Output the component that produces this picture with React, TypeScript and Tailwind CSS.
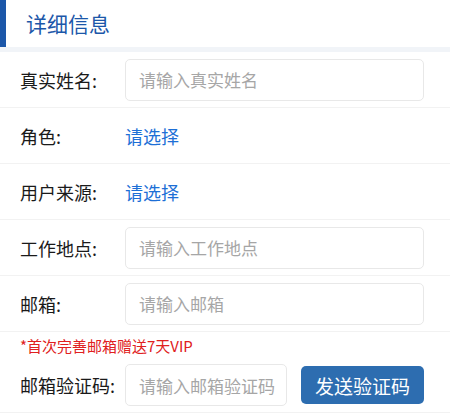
import React from "react";

const font = { fontFamily: '"Noto Sans CJK SC", "Noto Sans", sans-serif' };

function Row({ label, children, last }: { label: string; children: React.ReactNode; last?: boolean }) {
  return (
    <div className={`flex h-[56px] items-center pl-[20px] pr-[26px] ${last ? "" : "border-b border-[#f2f2f2]"}`}>
      <div className="w-[105px] shrink-0 text-[18px] text-[#1a1a1a]">{label}</div>
      {children}
    </div>
  );
}

function Input({ placeholder, className = "" }: { placeholder: string; className?: string }) {
  return (
    <div
      className={`flex h-[42px] items-center rounded-[5px] border border-[#e8e8e8] pl-[13px] text-[17px] text-[#a6a6a6] ${className}`}
    >
      {placeholder}
    </div>
  );
}

export default function App() {
  return (
    <div className="w-[450px] h-[415px] bg-white overflow-hidden leading-none" style={font}>
      <div className="flex h-[47px] items-center">
        <div className="h-full w-[6px] bg-[#1c57a9]" />
        <div className="pl-[20px] text-[21px] text-[#1c57a9]">详细信息</div>
      </div>
      <div className="h-[5px] bg-[#f1f4f8]" />
      <Row label="真实姓名:">
        <Input placeholder="请输入真实姓名" className="flex-1" />
      </Row>
      <Row label="角色:">
        <div className="text-[18px] text-[#1d6fd6]">请选择</div>
      </Row>
      <Row label="用户来源:">
        <div className="text-[18px] text-[#1d6fd6]">请选择</div>
      </Row>
      <Row label="工作地点:">
        <Input placeholder="请输入工作地点" className="flex-1" />
      </Row>
      <Row label="邮箱:">
        <Input placeholder="请输入邮箱" className="flex-1" />
      </Row>
      <div className="flex h-[26px] items-center pl-[20px] text-[15px] text-[#e02020]">*首次完善邮箱赠送7天VIP</div>
      <div className="flex h-[55px] items-center pl-[20px] pr-[26px] border-b border-[#f2f2f2]">
        <div className="w-[105px] shrink-0 text-[18px] text-[#1a1a1a]">邮箱验证码:</div>
        <Input placeholder="请输入邮箱验证码" className="w-[162px]" />
        <div className="ml-[14px] flex h-[38px] flex-1 items-center justify-center rounded-[5px] bg-[#2d6db0] text-[19px] text-white">
          发送验证码
        </div>
      </div>
    </div>
  );
}
